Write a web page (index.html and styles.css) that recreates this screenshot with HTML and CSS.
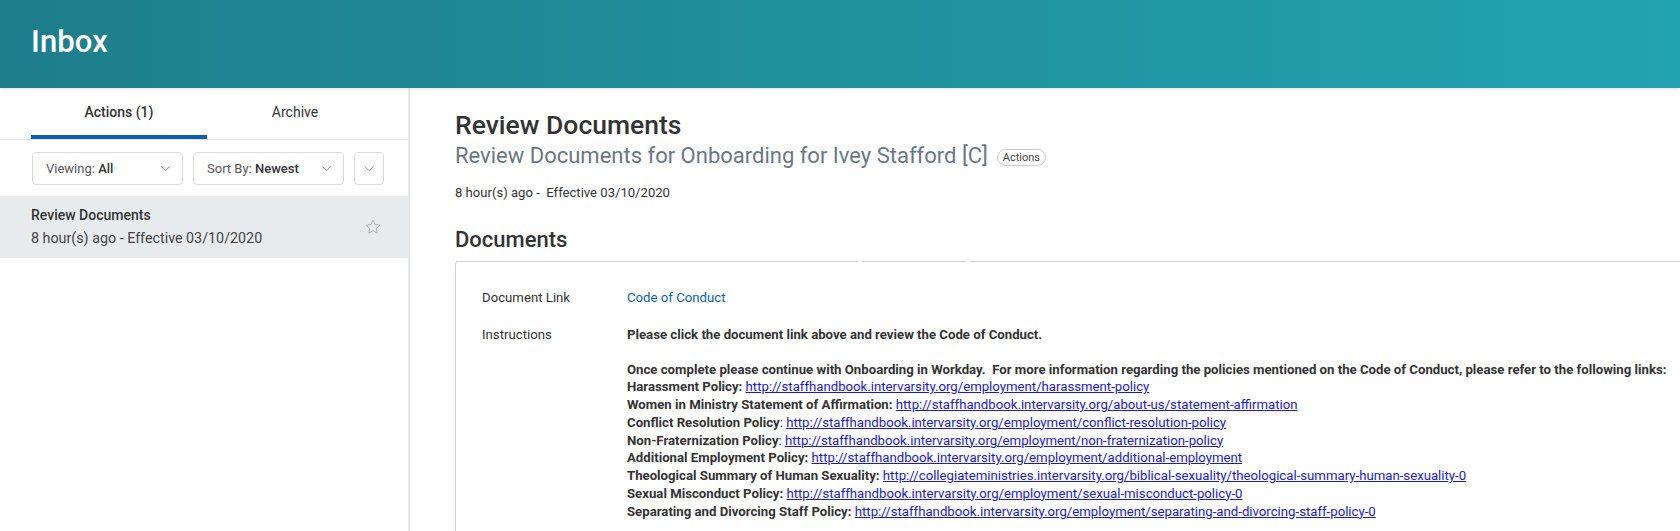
FILE: index.html
```html
<!DOCTYPE html>
<html lang="en">
<head>
<meta charset="utf-8">
<title>Inbox</title>
<link rel="stylesheet" href="styles.css">
</head>
<body>
<header class="topbar">
  <h1 class="topbar-title">Inbox</h1>
</header>
<div class="main">
  <aside class="sidebar">
    <nav class="tabs">
      <div class="tab tab-active">Actions (1)</div>
      <div class="tab">Archive</div>
    </nav>
    <div class="filters">
      <div class="select select-wide"><span class="select-label">Viewing: <b>All</b></span><svg class="chev" viewBox="0 0 12 8" width="11" height="7"><path d="M1 1.5l5 5 5-5" fill="none" stroke="#8a8a8a" stroke-width="1.1"/></svg></div>
      <div class="select select-wide"><span class="select-label">Sort By: <b>Newest</b></span><svg class="chev" viewBox="0 0 12 8" width="11" height="7"><path d="M1 1.5l5 5 5-5" fill="none" stroke="#8a8a8a" stroke-width="1.1"/></svg></div>
      <div class="select select-icon"><svg class="chev" viewBox="0 0 12 8" width="12" height="7"><path d="M1 1.5l5 5 5-5" fill="none" stroke="#8a8a8a" stroke-width="1.1"/></svg></div>
    </div>
    <div class="item item-selected">
      <div class="item-text">
        <div class="item-title">Review Documents</div>
        <div class="item-sub">8 hour(s) ago - Effective 03/10/2020</div>
      </div>
      <svg class="star" viewBox="0 0 24 24" width="18" height="18"><path d="M12 2.8l2.75 5.9 6.45.75-4.78 4.4 1.3 6.38L12 17.02l-5.72 3.21 1.3-6.38L2.8 9.45l6.45-.75z" fill="none" stroke="#a9adb1" stroke-width="1.2" stroke-linejoin="round"/></svg>
    </div>
  </aside>
  <section class="content">
    <h2 class="page-title">Review Documents</h2>
    <div class="subtitle-row">
      <span class="subtitle">Review Documents for Onboarding for Ivey Stafford [C]</span>
      <span class="pill">Actions</span>
    </div>
    <div class="meta">8 hour(s) ago -&nbsp; Effective 03/10/2020</div>
    <h3 class="section-title">Documents</h3>
    <div class="card">
      <div class="card-top"><span class="seg seg-a"></span><span class="seg seg-b"></span><span class="seg seg-c"></span></div>
      <div class="fields">
        <div class="field">
          <div class="field-label">Document Link</div>
          <div class="field-value"><a class="doc-link" href="#">Code of Conduct</a></div>
        </div>
        <div class="field">
          <div class="field-label">Instructions</div>
          <div class="field-value instructions">
            <p class="para">Please click the document link above and review the Code of Conduct.</p>
            <p class="para">Once complete please continue with Onboarding in Workday.&nbsp; For more information regarding the policies mentioned on the Code of Conduct, please refer to the following links:<br>
            Harassment Policy: <a class="ext" href="#">http://staffhandbook.intervarsity.org/employment/harassment-policy</a><br>
            Women in Ministry Statement of Affirmation: <a class="ext" href="#">http://staffhandbook.intervarsity.org/about-us/statement-affirmation</a><br>
            Conflict Resolution Policy<span class="thin">:</span> <a class="ext" href="#">http://staffhandbook.intervarsity.org/employment/conflict-resolution-policy</a><br>
            Non-Fraternization Policy<span class="thin">:</span> <a class="ext" href="#">http://staffhandbook.intervarsity.org/employment/non-fraternization-policy</a><br>
            Additional Employment Policy: <a class="ext" href="#">http://staffhandbook.intervarsity.org/employment/additional-employment</a><br>
            Theological Summary of Human Sexuality: <a class="ext" href="#">http://collegiateministries.intervarsity.org/biblical-sexuality/theological-summary-human-sexuality-0</a><br>
            Sexual Misconduct Policy: <a class="ext" href="#">http://staffhandbook.intervarsity.org/employment/sexual-misconduct-policy-0</a><br>
            Separating and Divorcing Staff Policy: <a class="ext" href="#">http://staffhandbook.intervarsity.org/employment/separating-and-divorcing-staff-policy-0</a></p>
          </div>
        </div>
      </div>
    </div>
  </section>
</div>
</body>
</html>
```
FILE: styles.css
```css
* { box-sizing: border-box; }
html, body { margin: 0; padding: 0; }
body {
  font-family: Roboto, "Liberation Sans", Arial, sans-serif;
  color: #333;
  background: #fff;
  overflow: hidden;
  height: 531px;
}
.topbar {
  height: 88px;
  background: linear-gradient(90deg, #1e7e8b 0%, #1f8f9b 45%, #22a3b0 100%);
  display: flex;
  align-items: center;
  padding: 0 0 6px 31px;
  box-shadow: 0 1px 3px rgba(0,0,0,0.12);
  position: relative;
  z-index: 1;
}
.topbar-title {
  margin: 0;
  color: #fff;
  font-size: 31px;
  font-weight: 500;
  letter-spacing: 0.1px;
}
.main {
  display: flex;
  height: 443px;
}
.sidebar {
  width: 410px;
  flex: none;
  border-right: 2px solid #e6e8ea;
}
.tabs {
  display: flex;
  padding-left: 31px;
  height: 52px;
  border-bottom: 1px solid #e2e4e6;
}
.tab {
  width: 176px;
  text-align: center;
  font-size: 14px;
  color: #333;
  padding-top: 14px;
  line-height: 20px;
}
.tab-active {
  font-weight: 500;
  border-bottom: 4px solid #0b5cb5;
}
.filters {
  display: flex;
  gap: 10px;
  padding: 12px 0 0 32px;
}
.select {
  height: 33px;
  border: 1px solid #d9dcde;
  border-radius: 4px;
  display: flex;
  align-items: center;
  justify-content: space-between;
  background: #fff;
}
.select-wide {
  width: 151px;
  padding: 0 11px 0 13px;
}
.select-icon {
  width: 30px;
  justify-content: center;
}
.select-label {
  font-size: 13px;
  color: #555;
}
.select-label b {
  font-weight: 500;
  color: #333;
}
.item {
  margin-top: 11px;
  height: 62px;
  display: flex;
  align-items: center;
  justify-content: space-between;
  padding: 0 26px 0 31px;
}
.item-selected { background: #e8ebee; }
.item-title {
  font-size: 14px;
  font-weight: 500;
  color: #333;
  line-height: 20px;
}
.item-sub {
  font-size: 14.3px;
  color: #444;
  line-height: 22px;
  margin-top: 2px;
}
.star { flex: none; }
.content {
  flex: 1;
  padding: 21px 0 0 45px;
  min-width: 0;
}
.page-title {
  margin: 0;
  font-size: 26.5px;
  font-weight: 500;
  color: #333;
  line-height: 32px;
}
.subtitle-row {
  display: flex;
  align-items: center;
  gap: 9px;
  margin-top: 0;
}
.subtitle {
  font-size: 22px;
  color: #6a7782;
  line-height: 30px;
}
.pill {
  font-size: 11px;
  color: #444;
  border: 1px solid #c9cdd0;
  border-radius: 10px;
  padding: 1px 5px;
  line-height: 13px;
  margin-top: 2px;
}
.meta {
  font-size: 13.1px;
  color: #333;
  margin-top: 13px;
  line-height: 18px;
}
.section-title {
  margin: 24px 0 0;
  font-size: 22px;
  font-weight: 500;
  color: #333;
  line-height: 28px;
}
.card {
  margin-top: 7px;
  border-left: 1px solid #cfd2d4;
  border-radius: 4px 0 0 0;
  height: 400px;
  position: relative;
}
.card-top {
  display: flex;
  gap: 4px;
  height: 1px;
}
.seg { height: 1px; background: #cfd2d4; }
.seg-a { width: 402px; border-top-left-radius: 4px; }
.seg-b { width: 104px; }
.seg-c { flex: 1; }
.fields {
  padding: 27px 0 0 26px;
}
.field {
  display: flex;
  font-size: 13.2px;
  line-height: 17.75px;
  margin-bottom: 19px;
}
.field-label {
  width: 145px;
  flex: none;
  color: #333;
}
.doc-link {
  color: #0e5eb3;
  text-decoration: none;
}
.instructions {
  font-weight: 700;
  color: #333;
}
.para { margin: 0 0 17px; }
.thin { font-weight: 400; }
.ext {
  color: #1a1acf;
  font-weight: 400;
  text-decoration: underline;
}
```
